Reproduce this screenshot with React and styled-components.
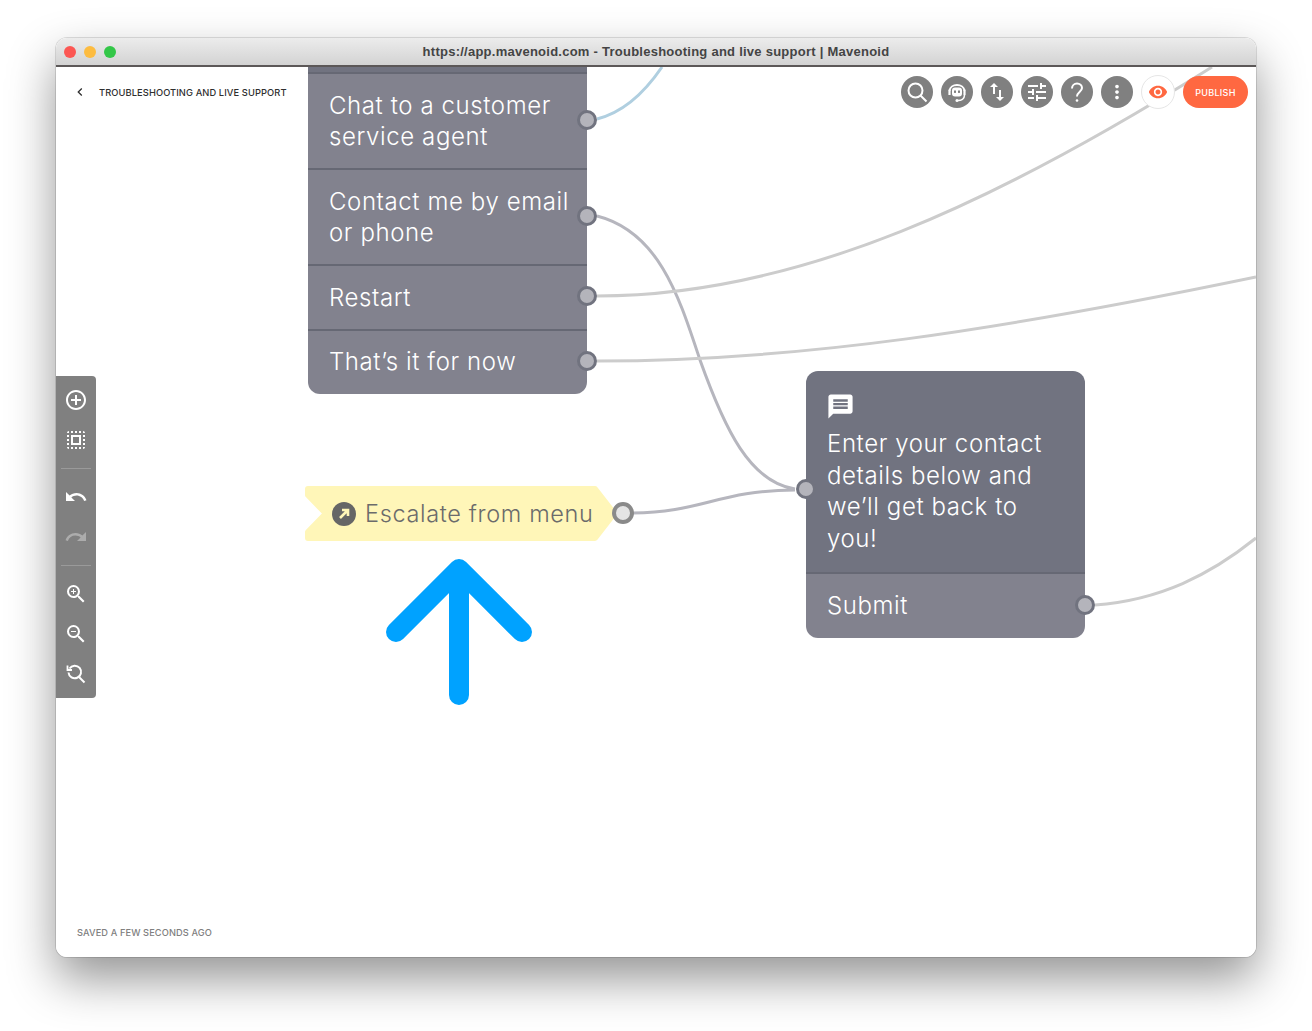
import React from 'react'
import styled, { createGlobalStyle } from 'styled-components'
import {
  MdAddCircleOutline,
  MdSelectAll,
  MdUndo,
  MdRedo,
  MdZoomIn,
  MdZoomOut,
  MdSwapVert,
  MdTune,
  MdMoreVert,
  MdVisibility,
  MdMessage,
  MdChevronLeft,
} from 'react-icons/md'

const GlobalStyle = createGlobalStyle`
  html, body {
    margin: 0;
    padding: 0;
    background: #fff;
    font-family: Inter, "Liberation Sans", sans-serif;
  }
`

const Desktop = styled.div`
  width: 1312px;
  height: 1031px;
  padding: 38px 56px 0;
  box-sizing: border-box;
  overflow: hidden;
`

const Window = styled.div`
  width: 1200px;
  height: 919px;
  border-radius: 11px;
  overflow: hidden;
  display: flex;
  flex-direction: column;
  background: #fff;
`

const WindowShadow = styled.div`
  width: 1200px;
  height: 919px;
  border-radius: 11px;
  box-shadow: 0 0 0 1px rgba(0, 0, 0, 0.12), 0 22px 48px rgba(0, 0, 0, 0.42);
`

const TitleBar = styled.div`
  height: 29px;
  box-sizing: border-box;
  flex: none;
  display: flex;
  align-items: center;
  justify-content: center;
  position: relative;
  background: linear-gradient(#ececec, #d3d3d3);
  border-bottom: 2px solid #5c5858;
  font-size: 13px;
  font-weight: 600;
  letter-spacing: 0.25px;
  color: #444;
  font-family: "Liberation Sans", sans-serif;
`

const Lights = styled.div`
  position: absolute;
  left: 8px;
  top: 8px;
  display: flex;
  gap: 8px;
`

const Light = styled.span`
  width: 12px;
  height: 12px;
  border-radius: 50%;
  background: ${({ color }) => color};
`

const Canvas = styled.div`
  flex: 1;
  position: relative;
  overflow: hidden;
`

const Edges = styled.svg`
  position: absolute;
  inset: 0;
  width: 1200px;
  height: 890px;
`

const Edge = styled.path`
  fill: none;
  stroke: ${({ color }) => color};
  stroke-width: 3;
`

const Header = styled.div`
  position: absolute;
  top: 9px;
  left: 0;
  right: 8px;
  height: 32px;
  display: flex;
  align-items: center;
  justify-content: space-between;
  padding-left: 16px;
`

const Crumb = styled.div`
  display: flex;
  align-items: center;
  gap: 11px;
  font-size: 9.3px;
  font-weight: 500;
  color: #2f2f2f;
  letter-spacing: 0.1px;
`

const Actions = styled.div`
  display: flex;
  align-items: center;
  gap: 8px;
`

const RoundButton = styled.div`
  width: 32px;
  height: 32px;
  border-radius: 50%;
  background: #808080;
  color: #fff;
  display: flex;
  align-items: center;
  justify-content: center;
`

const EyeButton = styled.div`
  width: 32px;
  height: 32px;
  border-radius: 50%;
  background: #fff;
  border: 1px solid #e6e6e6;
  color: #ff6841;
  display: flex;
  align-items: center;
  justify-content: center;
`

const Publish = styled.div`
  width: 65px;
  height: 32px;
  border-radius: 16px;
  background: #ff6841;
  color: #fff;
  font-size: 9px;
  font-weight: 500;
  letter-spacing: 0.3px;
  display: flex;
  align-items: center;
  justify-content: center;
`

const Toolbar = styled.div`
  position: absolute;
  left: 0;
  top: 309px;
  width: 40px;
  height: 322px;
  background: #808080;
  border-radius: 0 4px 4px 0;
  color: #fff;
  display: flex;
  flex-direction: column;
  align-items: center;
  padding-top: 4px;
  box-sizing: border-box;
`

const ToolSlot = styled.div`
  height: 40px;
  flex: none;
  display: flex;
  align-items: center;
  justify-content: center;
  opacity: ${({ $off }) => ($off ? 0.35 : 1)};
`

const ToolDivider = styled.div`
  width: 30px;
  height: 1px;
  background: #9a9a9a;
  margin: 8px 0;
  flex: none;
`

const Saved = styled.div`
  position: absolute;
  left: 21px;
  bottom: 19px;
  font-size: 9.25px;
  font-weight: 500;
  color: #808080;
  letter-spacing: 0.1px;
`

const Node = styled.div`
  position: absolute;
  left: ${({ $x }) => $x}px;
  top: ${({ $y }) => $y}px;
  width: 279px;
  color: #fff;
  font-size: 24px;
  font-weight: 300;
  letter-spacing: 0.6px;
`

const NodeBody = styled.div`
  background: #717380;
  border-radius: 12px 12px 0 0;
  padding: ${({ $pad }) => $pad};
  height: ${({ $h }) => ($h ? `${$h}px` : 'auto')};
  border-bottom: 2px solid #666874;
  line-height: 31.5px;
`

const BodyIcon = styled.div`
  height: 36px;
  margin-left: -1px;
`

const Row = styled.div`
  position: relative;
  background: #82828e;
  padding: 15.5px 21px;
  line-height: 31.5px;
  border-bottom: 2px solid #666874;
  white-space: pre;

  &:last-child {
    border-bottom: none;
    border-radius: 0 0 12px 12px;
    padding-bottom: 16.5px;
  }
`

const Port = styled.span`
  position: absolute;
  right: -10px;
  top: calc(50% - 11px);
  width: 20px;
  height: 20px;
  box-sizing: border-box;
  border-radius: 50%;
  background: #b4b4bb;
  border: 3px solid #71737f;
`

const InPort = styled(Port)`
  right: auto;
  left: -10px;
  top: 108px;
`

const Tag = styled.div`
  position: absolute;
  left: 249px;
  top: 419px;
  width: 310px;
  height: 55px;
  display: flex;
  align-items: center;
  gap: 9px;
  padding-left: 27px;
  box-sizing: border-box;
  color: #6b6b6b;
  font-size: 23.5px;
  font-weight: 300;
  letter-spacing: 0.65px;
  white-space: nowrap;
`

const TagShape = styled.svg`
  position: absolute;
  inset: 0;
  width: 310px;
  height: 55px;
  overflow: visible;
`

const TagContent = styled.span`
  position: relative;
  display: flex;
  align-items: center;
`

const TagPort = styled.span`
  position: absolute;
  left: 307px;
  top: 16px;
  width: 22px;
  height: 22px;
  box-sizing: border-box;
  border-radius: 50%;
  background: #e4e4e4;
  border: 4px solid #8a8a8a;
`

const BigArrow = styled.svg`
  position: absolute;
  left: 330px;
  top: 492px;
  width: 146px;
  height: 146px;
`

const edges = [
  { d: 'M597 119 C625 112 645 92 662 67', color: '#b0cfe0' },
  { d: 'M597 216 C660 232 680 300 700 360 C725 430 750 482 795 489', color: '#b6b6be' },
  { d: 'M597 296 C800 296 1000 200 1212 67', color: '#cccccc' },
  { d: 'M597 361 C800 361 1000 330 1256 277', color: '#cccccc' },
  { d: 'M633 513 C700 513 720 490 795 490', color: '#b6b6be' },
  { d: 'M1095 605 C1160 600 1210 575 1256 538', color: '#cccccc' },
]

const menuRows = ['Chat to a customer\nservice agent', 'Contact me by email\nor phone', 'Restart', 'That’s it for now']

function SearchIcon() {
  return (
    <svg width='26' height='26' viewBox='0 0 26 26' fill='none' stroke='#fff' strokeWidth='2'>
      <circle cx='11.500' cy='11.500' r='7' />
      <path d='M16.500 16.500 L22.500 22.500' />
    </svg>
  )
}

function HelpIcon() {
  return (
    <svg width='24' height='24' viewBox='0 0 24 24' fill='none' stroke='#fff' strokeWidth='2'>
      <path d='M7 8.500 C7 5.500 9.300 3.500 12 3.500 C14.800 3.500 17 5.500 17 8 C17 11.500 12 12 12 16.500' />
      <circle cx='12' cy='20.500' r='1.300' fill='#fff' stroke='none' />
    </svg>
  )
}

function HeadsetIcon() {
  return (
    <svg width='24' height='24' viewBox='0 0 24 24'>
      <path d='M4.500 11 C5 3 19 3 19.500 11' fill='none' stroke='#fff' strokeWidth='1.800' />
      <path d='M4.500 9.500 V15 M19.500 9.500 V15' stroke='#fff' strokeWidth='2.200' />
      <rect x='7' y='7.500' width='10' height='9' rx='3' fill='#fff' />
      <rect x='9' y='10.500' width='2' height='2.400' fill='#808080' />
      <rect x='13' y='10.500' width='2' height='2.400' fill='#808080' />
      <path d='M19.500 15 C19.500 19 16 20.500 13 20.500' fill='none' stroke='#fff' strokeWidth='1.600' />
      <circle cx='12' cy='20.500' r='1.500' fill='#fff' />
    </svg>
  )
}

function ZoomResetIcon() {
  return (
    <svg width='24' height='24' viewBox='0 0 24 24' fill='none' stroke='#fff' strokeWidth='2'>
      <path d='M5.500 6.500 A6.300 6.300 0 1 1 4.500 10.500' />
      <path d='M3.500 3.500 V8 H8' strokeWidth='1.800' />
      <path d='M14.500 14.500 L20.500 20.500' />
    </svg>
  )
}

function EscalateIcon() {
  return (
    <svg width='24' height='24' viewBox='0 0 24 24'>
      <circle cx='12' cy='12' r='12' fill='#666' />
      <path d='M8 16 L15.500 8.500 M10 8 H16 V14' fill='none' stroke='#fff6b8' strokeWidth='2.600' />
    </svg>
  )
}

export default function App() {
  return (
    <Desktop>
      <GlobalStyle />
      <WindowShadow>
        <Window>
          <TitleBar>
            <Lights>
              <Light color='#fc5753' />
              <Light color='#fdbc40' />
              <Light color='#33c748' />
            </Lights>
            https://app.mavenoid.com - Troubleshooting and live support | Mavenoid
          </TitleBar>
          <Canvas>
            <Edges viewBox='56 67 1200 890'>
              {edges.map((edge) => (
                <Edge key={edge.d} d={edge.d} color={edge.color} />
              ))}
            </Edges>

            <Node $x={252} $y={-20}>
              <NodeBody $pad='0' $h={25} />
              {menuRows.map((text) => (
                <Row key={text}>
                  {text}
                  <Port />
                </Row>
              ))}
            </Node>

            <Node $x={750} $y={304}>
              <NodeBody $pad='21px 21px 18px'>
                <BodyIcon>
                  <MdMessage size={29} />
                </BodyIcon>
                Enter your contact details below and we’ll get back to you!
              </NodeBody>
              <InPort />
              <Row>
                Submit
                <Port />
              </Row>
            </Node>

            <Tag>
              <TagShape viewBox='0 0 310 55'>
                <path
                  d='M3 3 H290 L309 27.500 L290 52 H3 V46 L21 27.500 L3 9 Z'
                  fill='#fff6b8'
                  stroke='#fff6b8'
                  strokeWidth='6'
                  strokeLinejoin='round'
                />
              </TagShape>
              <TagContent>
                <EscalateIcon />
              </TagContent>
              <TagContent>Escalate from menu</TagContent>
              <TagPort />
            </Tag>

            <BigArrow viewBox='0 0 146 146'>
              <path
                d='M73 136 V10 M10 73 L73 10 L136 73'
                fill='none'
                stroke='#00a2ff'
                strokeWidth='20'
                strokeLinecap='round'
                strokeLinejoin='round'
              />
            </BigArrow>

            <Header>
              <Crumb>
                <MdChevronLeft size={16} />
                TROUBLESHOOTING AND LIVE SUPPORT
              </Crumb>
              <Actions>
                <RoundButton><SearchIcon /></RoundButton>
                <RoundButton><HeadsetIcon /></RoundButton>
                <RoundButton><MdSwapVert size={24} /></RoundButton>
                <RoundButton><MdTune size={24} /></RoundButton>
                <RoundButton><HelpIcon /></RoundButton>
                <RoundButton><MdMoreVert size={22} /></RoundButton>
                <EyeButton><MdVisibility size={20} /></EyeButton>
                <Publish>PUBLISH</Publish>
              </Actions>
            </Header>

            <Toolbar>
              <ToolSlot><MdAddCircleOutline size={24} /></ToolSlot>
              <ToolSlot><MdSelectAll size={24} /></ToolSlot>
              <ToolDivider />
              <ToolSlot><MdUndo size={24} /></ToolSlot>
              <ToolSlot $off><MdRedo size={24} /></ToolSlot>
              <ToolDivider />
              <ToolSlot><MdZoomIn size={24} /></ToolSlot>
              <ToolSlot><MdZoomOut size={24} /></ToolSlot>
              <ToolSlot><ZoomResetIcon /></ToolSlot>
            </Toolbar>

            <Saved>SAVED A FEW SECONDS AGO</Saved>
          </Canvas>
        </Window>
      </WindowShadow>
    </Desktop>
  )
}
